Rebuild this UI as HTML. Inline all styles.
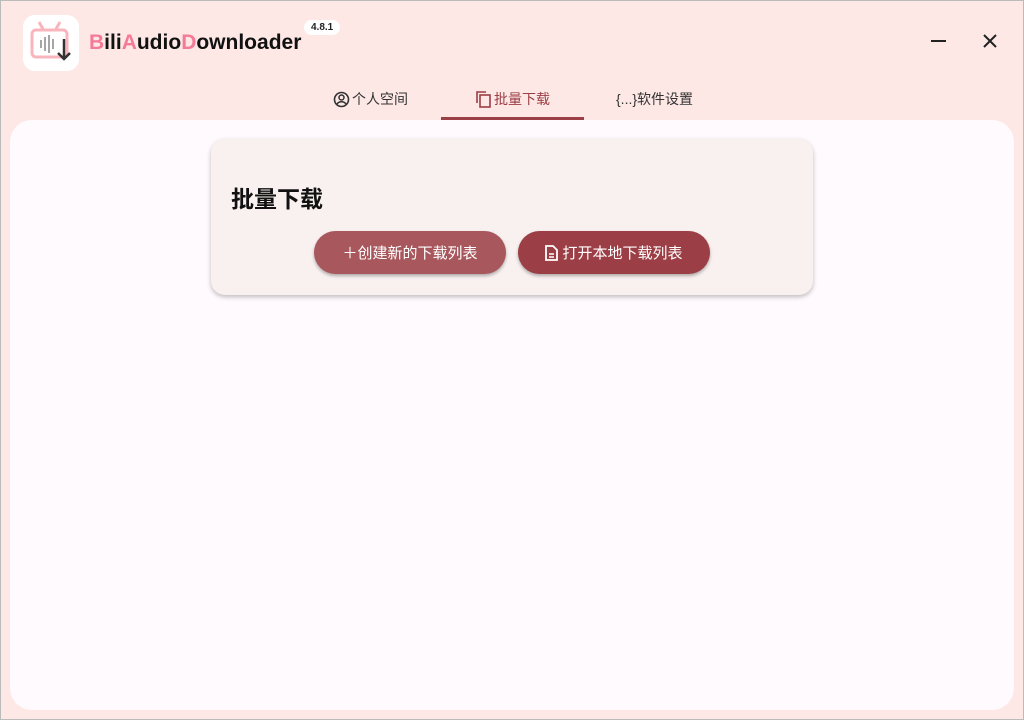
<!DOCTYPE html>
<html><head><meta charset="utf-8"><style>
*{margin:0;padding:0;box-sizing:border-box}
body{width:1024px;height:720px;overflow:hidden;background:#fde8e6;font-family:"Liberation Sans","Noto Sans CJK SC",sans-serif;position:relative}
.frame{position:absolute;left:0;top:0;width:1024px;height:720px;border:1px solid #bbb;pointer-events:none}
.logo{position:absolute;left:23px;top:15px;width:56px;height:56px;background:#fff;border-radius:12px}
.title{position:absolute;left:89px;top:31px;font-size:21px;font-weight:bold;color:#111}
.title b{color:#f47a98}
.ver{position:absolute;left:304px;top:20px;background:#fff;border-radius:8px;font-size:10px;font-weight:bold;padding:2px 7px;color:#222}
.tabs{position:absolute;top:79px;left:0;width:100%;height:40px}
.tab{position:absolute;top:0;height:40px;line-height:38px;font-size:14px;color:#333;display:flex;align-items:center;gap:2px}
.main{position:absolute;left:10px;top:120px;width:1004px;height:590px;background:#fffafd;border-radius:22px}
.card{position:absolute;left:211px;top:139px;width:602px;height:156px;background:#f9f1f0;border-radius:14px;box-shadow:0 2px 5px rgba(0,0,0,.25)}
.card h1{position:absolute;left:20px;top:41px;font-size:23px;font-weight:bold;color:#111}
.btn{position:absolute;top:92px;height:43px;border-radius:22px;color:#fff;font-size:15px;display:flex;align-items:center;justify-content:center;gap:4px;box-shadow:0 2px 3px rgba(0,0,0,.3)}
</style></head><body>
<div class="logo"><svg width="56" height="56" viewBox="0 0 56 56"><g stroke="#f9b5bd" stroke-width="3" fill="none"><rect x="9" y="15" width="35" height="27" rx="4"/><path d="M16 7l4 7M37 7l-4 7"/></g><g stroke="#888" stroke-width="1.5"><path d="M18 25v8M22 22v14M26 20v18M30 24v10"/></g><path d="M41 24v20M35 38l6 6 6-6" stroke="#333" stroke-width="2.5" fill="none"/></svg></div>
<div class="title"><b>B</b>ili<b>A</b>udio<b>D</b>ownloader</div>
<div class="ver">4.8.1</div>
<div style="position:absolute;left:931px;top:40px;width:15px;height:2px;background:#222"></div>
<svg style="position:absolute;left:982px;top:33px" width="16" height="16"><path d="M2 2l12 12M14 2L2 14" stroke="#222" stroke-width="2"/></svg>
<div class="tabs">
<div class="tab" style="left:333px"><svg width="17" height="17" viewBox="0 0 17 17"><circle cx="8.5" cy="8.5" r="7" fill="none" stroke="#333" stroke-width="1.6"/><circle cx="8.5" cy="6.5" r="2.5" fill="none" stroke="#333" stroke-width="1.5"/><path d="M4 13c2-3 7-3 9 0" fill="none" stroke="#333" stroke-width="1.5"/></svg>个人空间</div>
<div class="tab" style="left:475px;color:#9c3e45"><svg width="17" height="18" viewBox="0 0 17 18"><path d="M2 13V2h9" fill="none" stroke="#9c3e45" stroke-width="1.6"/><rect x="5" y="5" width="10" height="12" fill="none" stroke="#9c3e45" stroke-width="1.6"/></svg>批量下载</div>
<div style="position:absolute;left:441px;top:38px;width:143px;height:3px;background:#9c3e45"></div>
<div class="tab" style="left:616px">{...}软件设置</div>
</div>
<div class="main"></div>
<div class="card"><h1>批量下载</h1>
<div class="btn" style="left:103px;width:192px;background:#a8585d">＋创建新的下载列表</div>
<div class="btn" style="left:307px;width:192px;background:#9c3e45"><svg width="13" height="16" viewBox="0 0 13 16"><path d="M1 1h7l4 4v10H1z" fill="none" stroke="#fff" stroke-width="1.8"/><path d="M4 9h5M4 12h5" stroke="#fff" stroke-width="1.4"/></svg>打开本地下载列表</div>
</div>
<div class="frame"></div>
</body></html>
